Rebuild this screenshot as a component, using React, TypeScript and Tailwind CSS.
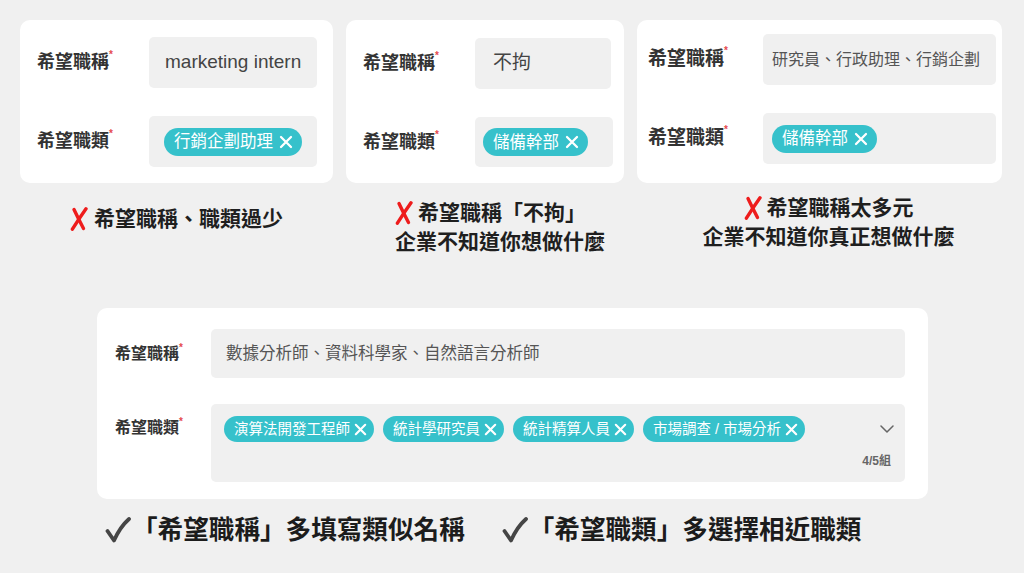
import React from "react";

function CloseIcon({ className }: { className: string }) {
  return (
    <svg viewBox="0 0 16 16" className={className} fill="none" stroke="currentColor" strokeWidth={2.3} strokeLinecap="round">
      <path d="M3 3 L13 13 M13 3 L3 13" />
    </svg>
  );
}

function RedCross() {
  return (
    <svg viewBox="0 0 18 24" className="w-[18px] h-[24px] shrink-0" fill="none" stroke="#ee1c1c" strokeWidth={3.4} strokeLinecap="round">
      <path d="M4 2.5 Q8.5 12 13.5 21.5" />
      <path d="M16 1.8 Q9.5 11 2.4 22.2" />
    </svg>
  );
}

function Check() {
  return (
    <svg viewBox="0 0 26 26" className="w-[26px] h-[26px] shrink-0" fill="none" stroke="#454545" strokeWidth={3.8} strokeLinecap="round" strokeLinejoin="round">
      <path d="M2.5 14 L9 23.5 Q15 10 24 2" />
    </svg>
  );
}

function Label({ text, size }: { text: string; size: string }) {
  return (
    <div className={`flex items-start font-bold text-[#333] ${size}`}>
      <span>{text}</span>
      <span className="text-[10px] leading-none text-[#e5484d] mt-[1px]">*</span>
    </div>
  );
}

function Tag({ text, big }: { text: string; big?: boolean }) {
  if (big) {
    return (
      <span className="inline-flex items-center h-[28px] rounded-full bg-[#36c1cb] text-white pl-[10px] pr-[8px] gap-[5px] text-[16.5px] leading-none">
        {text}
        <CloseIcon className="w-[16px] h-[16px]" />
      </span>
    );
  }
  return (
    <span className="inline-flex items-center h-[26px] rounded-full bg-[#36c1cb] text-white pl-[10px] pr-[6px] gap-[3px] text-[14.5px] leading-none whitespace-nowrap">
      {text}
      <CloseIcon className="w-[15px] h-[15px]" />
    </span>
  );
}

export default function App() {
  return (
    <div className="w-[1024px] h-[573px] overflow-hidden bg-[#f0f0f0] px-[20px] pt-[20px] font-['Liberation_Sans','Noto_Sans_CJK_TC',sans-serif]">
      <div className="flex gap-[13px] h-[288px]">
        {/* card 1 */}
        <div className="w-[313px] flex flex-col">
          <div className="bg-white rounded-[10px] h-[163px] pl-[17px] pt-[17px] flex flex-col gap-[28px]">
            <div className="flex items-center">
              <div className="w-[112px]"><Label text="希望職稱" size="text-[18px]" /></div>
              <div className="w-[168px] h-[51px] rounded-[5px] bg-[#f0f0f0] flex items-center pl-[16px] text-[19px] text-[#444]">marketing intern</div>
            </div>
            <div className="flex items-center">
              <div className="w-[112px]"><Label text="希望職類" size="text-[18px]" /></div>
              <div className="w-[168px] h-[51px] rounded-[5px] bg-[#f0f0f0] flex items-center pl-[15px]">
                <Tag text="行銷企劃助理" big />
              </div>
            </div>
          </div>
          <div className="mt-[21px] flex justify-center items-center gap-[6px] text-[21px] leading-[29px] font-bold text-[#1f1f1f]">
            <RedCross />
            <span>希望職稱、職類過少</span>
          </div>
        </div>

        {/* card 2 */}
        <div className="w-[278px] flex flex-col">
          <div className="bg-white rounded-[10px] h-[163px] pl-[17px] pt-[18px] flex flex-col gap-[28px]">
            <div className="flex items-center">
              <div className="w-[112px]"><Label text="希望職稱" size="text-[18px]" /></div>
              <div className="w-[136px] h-[51px] rounded-[5px] bg-[#f0f0f0] flex items-center pl-[18px] text-[19px] text-[#444]">不拘</div>
            </div>
            <div className="flex items-center">
              <div className="w-[112px]"><Label text="希望職類" size="text-[18px]" /></div>
              <div className="w-[138px] h-[50px] rounded-[5px] bg-[#f0f0f0] flex items-center pl-[8px]">
                <Tag text="儲備幹部" big />
              </div>
            </div>
          </div>
          <div className="mt-[15px] pl-[49px] text-[21px] leading-[29px] font-bold text-[#1f1f1f]">
            <div className="flex items-center gap-[5px]">
              <RedCross />
              <span>希望職稱「不拘」</span>
            </div>
            <div>企業不知道你想做什麼</div>
          </div>
        </div>

        {/* card 3 */}
        <div className="w-[365px] flex flex-col">
          <div className="bg-white rounded-[10px] h-[163px] pl-[11px] pt-[14px] flex flex-col gap-[28px]">
            <div className="flex items-center">
              <div className="w-[115px]"><Label text="希望職稱" size="text-[19px]" /></div>
              <div className="w-[233px] h-[51px] rounded-[5px] bg-[#f0f0f0] flex items-center pl-[9px] text-[16px] text-[#555]">研究員、行政助理、行銷企劃</div>
            </div>
            <div className="flex items-center">
              <div className="w-[115px]"><Label text="希望職類" size="text-[19px]" /></div>
              <div className="w-[233px] h-[51px] rounded-[5px] bg-[#f0f0f0] flex items-center pl-[9px]">
                <Tag text="儲備幹部" big />
              </div>
            </div>
          </div>
          <div className="mt-[10px] pl-[18px] text-center text-[21px] leading-[29px] font-bold text-[#1f1f1f]">
            <div className="flex justify-center items-center gap-[5px]">
              <RedCross />
              <span>希望職稱太多元</span>
            </div>
            <div>企業不知道你真正想做什麼</div>
          </div>
        </div>
      </div>

      {/* bottom card */}
      <div className="ml-[77px] w-[831px] h-[191px] rounded-[10px] bg-white pt-[21px] pl-[18px] pr-[23px] flex flex-col gap-[26px]">
        <div className="flex items-center">
          <div className="w-[96px]"><Label text="希望職稱" size="text-[16px]" /></div>
          <div className="flex-1 h-[49px] rounded-[5px] bg-[#f0f0f0] flex items-center pl-[15px] text-[16.5px] text-[#555]">
            數據分析師、資料科學家、自然語言分析師
          </div>
        </div>
        <div className="flex items-start">
          <div className="w-[96px] pt-[12px] leading-[24px]"><Label text="希望職類" size="text-[16px]" /></div>
          <div className="flex-1 h-[78px] rounded-[5px] bg-[#f0f0f0] flex flex-col pl-[13px] pr-[11px] pt-[12px]">
            <div className="flex items-center">
              <div className="flex-1 flex gap-[9px]">
                <Tag text="演算法開發工程師" />
                <Tag text="統計學研究員" />
                <Tag text="統計精算人員" />
                <Tag text="市場調查 / 市場分析" />
              </div>
              <svg viewBox="0 0 14 8" className="w-[14px] h-[8px]" fill="none" stroke="#666" strokeWidth={1.5} strokeLinecap="round" strokeLinejoin="round">
                <path d="M1 1 L7 7 L13 1" />
              </svg>
            </div>
            <div className="mt-[11px] pr-[3px] text-right text-[12px] font-bold text-[#666] leading-[16px]">4/5組</div>
          </div>
        </div>
      </div>

      {/* bottom tips */}
      <div className="mt-[14px] pl-[85px] flex items-center gap-[37px] text-[25.6px] leading-[34px] font-bold text-[#1c1c1c]">
        <div className="flex items-center gap-[1px]">
          <Check />
          <span>「希望職稱」多填寫類似名稱</span>
        </div>
        <div className="flex items-center gap-[1px]">
          <Check />
          <span>「希望職類」多選擇相近職類</span>
        </div>
      </div>
    </div>
  );
}
